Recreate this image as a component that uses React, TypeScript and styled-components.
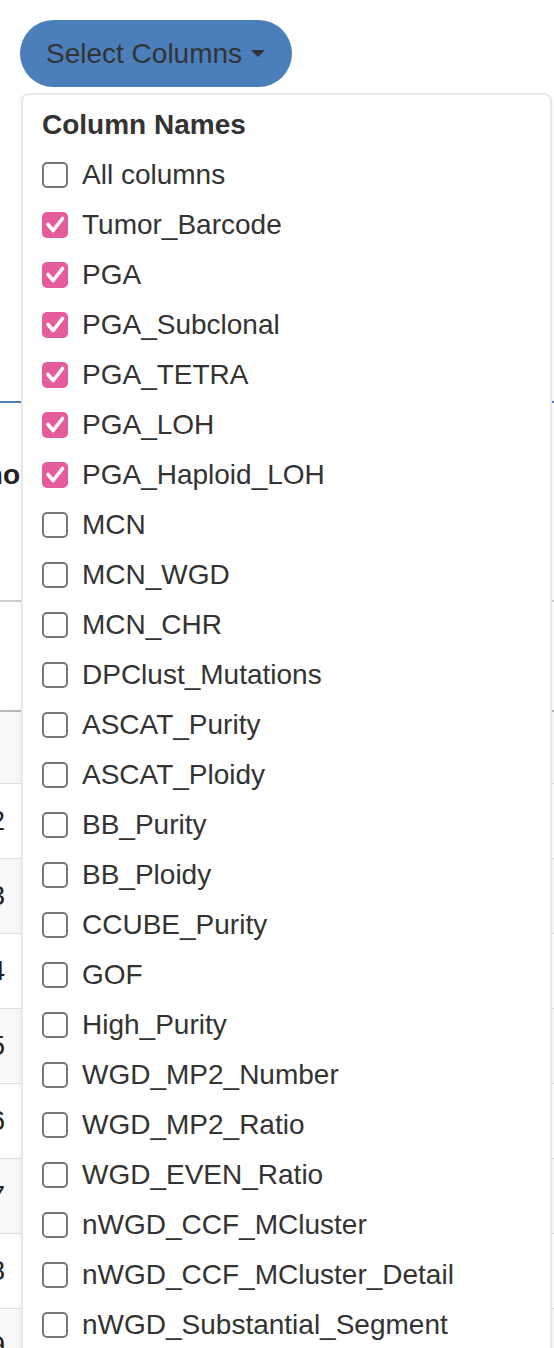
import React from "react";
import styled, { createGlobalStyle } from "styled-components";

const GlobalStyle = createGlobalStyle`
  html, body {
    margin: 0;
    padding: 0;
    background: #fff;
  }
  body {
    font-family: "Liberation Sans", Arial, Helvetica, sans-serif;
    color: #333;
    overflow: hidden;
  }
`;

const columns: { name: string; checked: boolean }[] = [
  { name: "All columns", checked: false },
  { name: "Tumor_Barcode", checked: true },
  { name: "PGA", checked: true },
  { name: "PGA_Subclonal", checked: true },
  { name: "PGA_TETRA", checked: true },
  { name: "PGA_LOH", checked: true },
  { name: "PGA_Haploid_LOH", checked: true },
  { name: "MCN", checked: false },
  { name: "MCN_WGD", checked: false },
  { name: "MCN_CHR", checked: false },
  { name: "DPClust_Mutations", checked: false },
  { name: "ASCAT_Purity", checked: false },
  { name: "ASCAT_Ploidy", checked: false },
  { name: "BB_Purity", checked: false },
  { name: "BB_Ploidy", checked: false },
  { name: "CCUBE_Purity", checked: false },
  { name: "GOF", checked: false },
  { name: "High_Purity", checked: false },
  { name: "WGD_MP2_Number", checked: false },
  { name: "WGD_MP2_Ratio", checked: false },
  { name: "WGD_EVEN_Ratio", checked: false },
  { name: "nWGD_CCF_MCluster", checked: false },
  { name: "nWGD_CCF_MCluster_Detail", checked: false },
  { name: "nWGD_Substantial_Segment", checked: false },
];

const Page = styled.div`
  position: relative;
  width: 554px;
  height: 1348px;
  overflow: hidden;
`;

const Toolbar = styled.div`
  display: flex;
  padding: 20px 20px 0;
`;

const SelectButton = styled.button`
  display: flex;
  align-items: center;
  gap: 9px;
  height: 67px;
  padding: 0 27px 0 26px;
  border: none;
  border-radius: 34px;
  background: #4b7fbc;
  color: #333;
  font: 28px "Liberation Sans", Arial, sans-serif;
  cursor: pointer;
`;

const Caret = styled.span`
  width: 0;
  height: 0;
  border-left: 7px solid transparent;
  border-right: 7px solid transparent;
  border-top: 7px solid #333;
`;

// box behind the menu, only its bottom edge shows
const FilterBox = styled.div`
  height: 314px;
  margin: 0 -4px;
  border: 2px solid #4b7fbc;
  border-top: none;
  border-radius: 0 0 6px 6px;
`;

const HeadingRow = styled.div`
  display: flex;
  justify-content: flex-end;
  width: 20px;
  margin-top: 52px;
  line-height: 40px;
  font-size: 28px;
  font-weight: bold;
  color: #222;
  white-space: nowrap;
`;

const Table = styled.div`
  margin-top: 105px;
  border-top: 2px solid #cfcfcf;
`;

const HeaderRow = styled.div`
  height: 108px;
  border-bottom: 2px solid #b9b9b9;
`;

const Row = styled.div<{ $striped: boolean; $h: number }>`
  display: flex;
  align-items: center;
  height: ${(p) => p.$h}px;
  border-bottom: 1px solid #dedede;
  background: ${(p) => (p.$striped ? "#f9f9f9" : "#fff")};
`;

const IndexCell = styled.div`
  display: flex;
  justify-content: flex-end;
  width: 5px;
  font-size: 28px;
  color: #222;
  white-space: nowrap;
`;

const Menu = styled.div`
  position: absolute;
  top: 93px;
  left: 21px;
  box-sizing: border-box;
  width: 531px;
  bottom: -40px;
  padding: 5px 0 0 19px;
  background: #fff;
  border: 2px solid #e8e8e8;
  border-radius: 8px;
  box-shadow: 0 3px 8px rgba(0, 0, 0, 0.06);
`;

const MenuHeader = styled.div`
  line-height: 50px;
  font-size: 28px;
  font-weight: bold;
  color: #333;
`;

const Option = styled.label`
  display: flex;
  align-items: center;
  gap: 14px;
  height: 50px;
  font-size: 28px;
  color: #333;
  white-space: nowrap;
`;

const Box = styled.span<{ $checked: boolean }>`
  display: flex;
  align-items: center;
  justify-content: center;
  box-sizing: border-box;
  width: 26px;
  height: 26px;
  border-radius: 5px;
  background: ${(p) => (p.$checked ? "#e55c9c" : "#fff")};
  border: ${(p) => (p.$checked ? "none" : "2px solid #777")};
`;

function CheckBox({ checked }: { checked: boolean }) {
  return (
    <Box $checked={checked}>
      {checked && (
        <svg width="26" height="26" viewBox="0 0 26 26">
          <path
            d="M6 12.5 L11.2 18.5 L20.5 6.5"
            fill="none"
            stroke="#fff"
            strokeWidth="3.6"
            strokeLinecap="round"
            strokeLinejoin="round"
          />
        </svg>
      )}
    </Box>
  );
}

const rowHeights = [71, 74, 74, 74, 74, 74, 74, 74, 74];

export default function App() {
  return (
    <Page>
      <GlobalStyle />
      <Toolbar>
        <SelectButton>
          Select Columns
          <Caret />
        </SelectButton>
      </Toolbar>
      <FilterBox />
      <HeadingRow>Geno</HeadingRow>
      <Table>
        <HeaderRow />
        {rowHeights.map((h, i) => (
          <Row key={i} $striped={i % 2 === 0} $h={h}>
            <IndexCell>{i > 0 ? i + 1 : ""}</IndexCell>
          </Row>
        ))}
      </Table>
      <Menu>
        <MenuHeader>Column Names</MenuHeader>
        {columns.map((c) => (
          <Option key={c.name}>
            <CheckBox checked={c.checked} />
            {c.name}
          </Option>
        ))}
      </Menu>
    </Page>
  );
}
